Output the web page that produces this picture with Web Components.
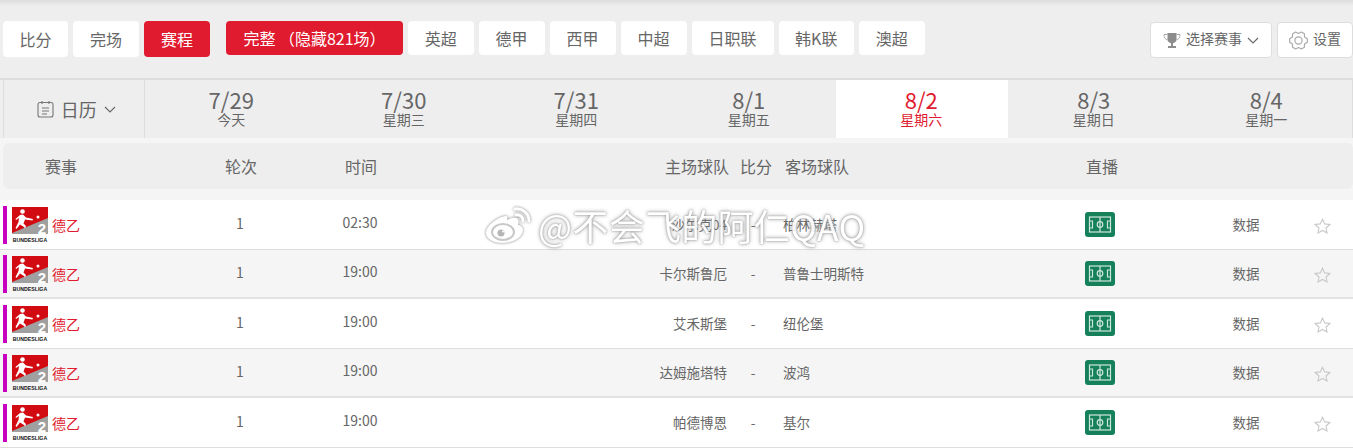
<!DOCTYPE html>
<html lang="zh">
<head>
<meta charset="utf-8">
<title>赛程</title>
<style>
    html, body { margin: 0; height: 448px; overflow: hidden; }
    body {
        background: #f5f5f5;
        color: #666;
        font-family: "Noto Sans CJK SC", "Liberation Sans", sans-serif;
        font-size: 14px;
        position: relative;
    }
</style>
</head>
<body>
<score-page></score-page>

<script>
const ICONS = {
    calendar: `<svg width="17" height="18" viewBox="0 0 17 18" fill="none" stroke="#777" stroke-width="1.1"><rect x="1" y="2.5" width="15" height="14.5" rx="2"/><path d="M5 1v3M12 1v3M5 8h7M5 11h7M5 14h5"/></svg>`,
    chevron: `<svg width="12" height="7" viewBox="0 0 12 7" fill="none" stroke="#666" stroke-width="1.1"><path d="M1 1l5 5 5-5"/></svg>`,
    trophy: `<svg width="18" height="17" viewBox="0 0 18 17"><path d="M4.500 1h9v6c0 2.600-1.800 4-3.500 4.300V14h3v2H5v-2h3v-2.700C6.300 11 4.500 9.600 4.500 7z" fill="#8c8c8c"/><path d="M4.500 2.500H1c0 3 1.200 5 4 5.500M13.500 2.500H17c0 3-1.200 5-4 5.500" fill="none" stroke="#aaa" stroke-width="1"/></svg>`,
    gear: `<svg width="19" height="19" viewBox="0 0 19 19" fill="none" stroke="#aaa" stroke-width="1.200" stroke-linejoin="round"><path d="M18.330 7.780V11.220L15.560 13 15.400 16.290 12.430 18 9.500 16.500 6.570 18 3.600 16.290 3.440 13 .67 11.220V7.780L3.440 6 3.600 2.710 6.570 1 9.500 2.500 12.430 1 15.400 2.710 15.560 6z"/><circle cx="9.500" cy="9.500" r="3.600"/></svg>`,
    pitch: `<svg width="30" height="25" viewBox="0 0 30 25"><rect width="30" height="25" rx="3" fill="#15805a"/><g fill="none" stroke="#cfe6dc" stroke-width="1.200"><rect x="4.500" y="5" width="21" height="15"/><path d="M15 5v15M4.500 9h3v7h-3M25.500 9h-3v7h3"/><circle cx="15" cy="12.500" r="2.800"/></g></svg>`,
    star: `<svg class="star" width="17" height="16" viewBox="0 0 17 16" fill="none" stroke="#c8c8c8" stroke-width="1.100"><path d="M8.500 1.200l2.200 4.700 5.100.6-3.800 3.500 1 5-4.500-2.500L4 15l1-5L1.200 6.500l5.100-.6z"/></svg>`,
    weibo: `<svg class="wb" width="48" height="36" viewBox="0 0 48 36"><path d="M20 9C11 11 1 19 1 26c0 6 8 10 16 10 11 0 21-6 21-13 0-3-3-5-5-5 1-3 1-6-2-7-3-1-7 1-9 2 1-3 0-5-2-4z" fill="#fff"/><ellipse cx="18" cy="25" rx="11" ry="8" fill="none" stroke="#c4c4c4" stroke-width="2"/><circle cx="16" cy="26" r="3.500" fill="#b0b0b0"/><circle cx="18" cy="24.500" r="1" fill="#fff"/><path d="M30 2c7-1 14 4 14 12M31 8c4-1 7 2 7 6" fill="none" stroke="#fff" stroke-width="3" stroke-linecap="round"/></svg>`
};

class TabBtn extends HTMLElement {
    connectedCallback() {
        const root = this.shadowRoot || this.attachShadow({ mode: 'open' });
        root.innerHTML = `
            <style>
                :host {
                    display: flex;
                    align-items: center;
                    justify-content: center;
                    box-sizing: border-box;
                    width: var(--w, 66px);
                    height: var(--h, 36px);
                    background: #fff;
                    border-radius: 4px;
                    font-size: 16px;
                    color: #666;
                    white-space: nowrap;
                }
                :host([active]) { background: #e01b2f; color: #fff; }
            </style>
            <slot></slot>
        `;
    }
}

class ToolBtn extends HTMLElement {
    connectedCallback() {
        const root = this.shadowRoot || this.attachShadow({ mode: 'open' });
        root.innerHTML = `
            <style>
                :host {
                    display: flex;
                    align-items: center;
                    justify-content: center;
                    gap: 5px;
                    box-sizing: border-box;
                    height: 36px;
                    background: #fff;
                    border: 1px solid #ddd;
                    border-radius: 4px;
                    font-size: 14px;
                    color: #666;
                }
                svg { display: block; }
                span { position: relative; top: -2px; }
            </style>
            ${ICONS[this.getAttribute('icon')]}
            <span><slot></slot></span>
            ${this.hasAttribute('arrow') ? ICONS.chevron : ''}
        `;
    }
}

class DateCell extends HTMLElement {
    connectedCallback() {
        const root = this.shadowRoot || this.attachShadow({ mode: 'open' });
        root.innerHTML = `
            <style>
                :host {
                    flex: 1;
                    display: flex;
                    flex-direction: column;
                    align-items: center;
                    padding: 5px 1px 0 0;
                    color: #666;
                }
                :host([active]) { background: #fff; color: #e01b2f; }
                .d { font-size: 22px; line-height: 28px; }
                .w { font-size: 14px; line-height: 15px; margin-top: -1px; }
            </style>
            <div class="d">${this.getAttribute('date')}</div>
            <div class="w">${this.getAttribute('week')}</div>
        `;
    }
}

class CalendarCell extends HTMLElement {
    connectedCallback() {
        const root = this.shadowRoot || this.attachShadow({ mode: 'open' });
        root.innerHTML = `
            <style>
                :host {
                    flex: none;
                    width: 141.500px;
                    box-sizing: border-box;
                    margin: 0 1px 0 3px;
                    padding-left: 5px;
                    border-left: 1px solid #ddd;
                    border-right: 1px solid #ddd;
                    display: flex;
                    align-items: center;
                    justify-content: center;
                    gap: 7px;
                    font-size: 18px;
                    color: #666;
                }
                svg { display: block; }
            </style>
            ${ICONS.calendar}<span>日历</span>${ICONS.chevron}
        `;
    }
}

const COLS = '180px 120px 120px 313px 40px 267px 120px 142px 40px 11px';

class TableHead extends HTMLElement {
    connectedCallback() {
        const root = this.shadowRoot || this.attachShadow({ mode: 'open' });
        root.innerHTML = `
            <style>
                :host {
                    display: grid;
                    grid-template-columns: 178px 120px 120px 313px 40px 267px 120px;
                    align-items: center;
                    height: 46px;
                    margin: 5px 0 11px 3px;
                    background: #eee;
                    border-radius: 6px;
                    font-size: 16px;
                    color: #666;
                    text-align: center;
                    white-space: nowrap;
                }
                .c1 { width: 116px; }
                .home { text-align: right; padding-right: 5px; }
                .score { padding-left: 4px; }
                .away { text-align: left; padding-left: 11px; }
                .live { padding-left: 2px; }
            </style>
            <div class="c1">赛事</div><div>轮次</div><div>时间</div>
            <div class="home">主场球队</div><div class="score">比分</div><div class="away">客场球队</div>
            <div class="live">直播</div>
        `;
    }
}

class LeagueLogo extends HTMLElement {
    connectedCallback() {
        const root = this.shadowRoot || this.attachShadow({ mode: 'open' });
        root.innerHTML = `
            <style>
                :host { display: block; width: 36px; }
                svg { display: block; overflow: visible; }
                .t { font: bold 5.200px/7px "Liberation Sans", sans-serif; color: #111; white-space: nowrap; margin-top: 3px; }
            </style>
            <svg width="36" height="27" viewBox="0 0 36 27">
                <rect width="36" height="27" fill="#d20a11"/>
                <polygon points="0,26 36,11 36,27 0,27" fill="#a0a0a0"/>
                <circle cx="10.500" cy="4.500" r="2.300" fill="#fff"/>
                <path d="M8 8l3-.5 3 3 7 1.500-.5 1.500-7.500-1-1.500 4 2.500 2.500-1 2.500-1-1.500-4-2.500-3.500 4.500-1-1 3-6 .5-4-3 2-.5-1z" fill="#fff"/>
                <circle cx="26" cy="10" r="1.500" fill="#fff"/>
                <text x="30" y="26.500" font-family="Liberation Sans" font-weight="bold" font-size="15" fill="#fff" text-anchor="middle">2</text>
            </svg>
            <div class="t">BUNDESLIGA</div>
        `;
    }
}

class MatchRow extends HTMLElement {
    connectedCallback() {
        const root = this.shadowRoot || this.attachShadow({ mode: 'open' });
        root.innerHTML = `
            <style>
                :host {
                    display: grid;
                    grid-template-columns: ${COLS};
                    align-items: center;
                    box-sizing: border-box;
                    height: 49.500px;
                    background: #fff;
                    border-bottom: 1px solid #ddd;
                    font-size: 13.500px;
                    color: #666;
                    text-align: center;
                    white-space: nowrap;
                }
                :host([alt]) { background: #f5f5f5; border-bottom: 2px solid #e3e3e3; }
                .league { display: flex; align-items: center; padding-left: 3px; position: relative; top: 1px; }
                .bar { width: 4px; height: 38px; background: #c800c0; margin-right: 5px; }
                .name { color: #e01b2f; font-size: 14px; margin-left: 4px; }
                .round, .time { font-size: 14px; }
                .round { position: relative; top: -1px; }
                .time { position: relative; top: -2px; }
                .home { text-align: right; padding-right: 6px; }
                .away { text-align: left; padding-left: 10px; }
                svg { display: block; margin: auto; }
                .star { position: relative; top: 1.500px; }
                .data { padding-left: 30px; }
            </style>
            <div class="league"><span class="bar"></span><league-logo></league-logo><span class="name">德乙</span></div>
            <div class="round">${this.getAttribute('round')}</div>
            <div class="time">${this.getAttribute('time')}</div>
            <div class="home">${this.getAttribute('home')}</div>
            <div>-</div>
            <div class="away">${this.getAttribute('away')}</div>
            <div>${ICONS.pitch}</div>
            <div class="data">数据</div>
            <div>${ICONS.star}</div>
        `;
    }
}

class WeiboMark extends HTMLElement {
    connectedCallback() {
        const root = this.shadowRoot || this.attachShadow({ mode: 'open' });
        root.innerHTML = `
            <style>
                :host {
                    position: absolute;
                    left: 485px;
                    top: 206px;
                    display: flex;
                    align-items: center;
                    gap: 5px;
                    font-size: 36px;
                    line-height: 38px;
                    letter-spacing: .3px;
                    color: #fff;
                    text-shadow: 0 0 2px #888, 0 0 4px #999;
                    white-space: nowrap;
                    pointer-events: none;
                    opacity: .92;
                }
                .wb { display: block; filter: drop-shadow(0 0 1.500px #777); }
            </style>
            ${ICONS.weibo}<span>@不会飞的阿仁QAQ</span>
        `;
    }
}

class ScorePage extends HTMLElement {
    connectedCallback() {
        const root = this.shadowRoot || this.attachShadow({ mode: 'open' });
        const dates = [['7/29','今天'],['7/30','星期三'],['7/31','星期四'],['8/1','星期五'],['8/2','星期六'],['8/3','星期日'],['8/4','星期一']];
        const leagues = [['英超',65.5],['德甲',66],['西甲',66],['中超',66],['日职联',82],['韩K联',75.5],['澳超',65.5]];
        const matches = [
            ['02:30','沙尔克04','柏林赫塔'],
            ['19:00','卡尔斯鲁厄','普鲁士明斯特'],
            ['19:00','艾禾斯堡','纽伦堡'],
            ['19:00','达姆施塔特','波鸿'],
            ['19:00','帕德博恩','基尔']
        ];
        root.innerHTML = `
            <style>
                :host { display: block; width: 1353px; }
                .top {
                    height: 80px;
                    box-sizing: border-box;
                    background: linear-gradient(#ddd, #eee 6px);
                    border-bottom: 2px solid #ddd;
                    display: flex;
                    justify-content: space-between;
                    padding: 21px 0 0 3px;
                }
                .group { display: flex; gap: 5px; align-items: flex-start; }
                .tools { padding-top: 1px; }
                .wide { margin-left: 11px; }
                .dates { display: flex; height: 58px; background: #eee; box-shadow: inset -1px 0 #ddd; }
            </style>
            <div class="top">
                <div class="group">
                    <tab-btn style="--w:65px">比分</tab-btn>
                    <tab-btn>完场</tab-btn>
                    <tab-btn active>赛程</tab-btn>
                    <tab-btn active class="wide" style="--w:177px;--h:34px">完整 （隐藏821场）</tab-btn>
                    ${leagues.map(([n, w]) => `<tab-btn style="--w:${w}px;--h:34px">${n}</tab-btn>`).join('')}
                </div>
                <div class="group tools">
                    <tool-btn icon="trophy" arrow style="width:122px">选择赛事</tool-btn>
                    <tool-btn icon="gear" style="width:76px">设置</tool-btn>
                </div>
            </div>
            <div class="dates">
                <calendar-cell></calendar-cell>
                ${dates.map(([d, w]) => `<date-cell date="${d}" week="${w}" ${d === '8/2' ? 'active' : ''}></date-cell>`).join('')}
            </div>
            <table-head></table-head>
            <div>
                ${matches.map(([t, h, a], i) => `<match-row round="1" time="${t}" home="${h}" away="${a}" ${i % 2 ? 'alt' : ''}></match-row>`).join('')}
            </div>
            <weibo-mark></weibo-mark>
        `;
    }
}

customElements.define('tab-btn', TabBtn);
customElements.define('tool-btn', ToolBtn);
customElements.define('date-cell', DateCell);
customElements.define('calendar-cell', CalendarCell);
customElements.define('table-head', TableHead);
customElements.define('league-logo', LeagueLogo);
customElements.define('match-row', MatchRow);
customElements.define('weibo-mark', WeiboMark);
customElements.define('score-page', ScorePage);
</script>
</body>
</html>
